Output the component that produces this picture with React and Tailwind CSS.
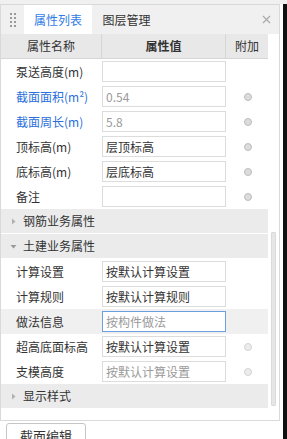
import React from 'react';

const rows = [
  { label: '泵送高度(m)', value: '', radio: false },
  { label: '截面面积(m²)', value: '0.54', blue: true, muted: true, radio: true },
  { label: '截面周长(m)', value: '5.8', blue: true, muted: true, radio: true },
  { label: '顶标高(m)', value: '层顶标高', radio: true },
  { label: '底标高(m)', value: '层底标高', radio: true },
  { label: '备注', value: '', radio: true },
];

const civilRows = [
  { label: '计算设置', value: '按默认计算设置' },
  { label: '计算规则', value: '按默认计算规则' },
  { label: '做法信息', value: '按构件做法', muted: true, active: true },
  { label: '超高底面标高', value: '按默认计算设置', radio: true, light: true },
  { label: '支模高度', value: '按默认计算设置', muted: true, radio: true, light: true },
];

const Radio = ({ light }) => (
  <span
    className={`block w-[8px] h-[8px] rounded-full border ${
      light ? 'border-[#d4d4d4] bg-[#ececec]' : 'border-[#bdbdbd] bg-[#dcdcdc]'
    }`}
  />
);

const PropRow = ({ row }) => (
  <div className={`flex h-[25px] ${row.active ? 'bg-[#f0f0f0]' : ''}`}>
    <div
      className={`w-[101px] pl-[15px] flex items-center whitespace-nowrap ${
        row.blue ? 'text-[#2a6fdb]' : 'text-[#333]'
      }`}
    >
      {row.label}
    </div>
    <div
      className={`w-[124px] h-[21px] mt-[2px] border bg-white flex items-center pl-[3px] whitespace-nowrap ${
        row.active ? 'border-[#6a9fe0]' : 'border-[#dcdcdc]'
      } ${row.muted ? 'text-[#9a9a9a]' : 'text-[#333]'}`}
    >
      {row.value}
    </div>
    <div className="flex-1 flex items-center justify-center pl-[1px]">
      {row.radio && <Radio light={row.light} />}
    </div>
  </div>
);

const GroupHeader = ({ title, open }) => (
  <div className="h-[25px] border-b border-white bg-[#ebebeb] flex items-center text-[#333]">
    <span className="w-[22px] flex justify-center pl-[2px]">
      {open ? (
        <svg width="7" height="7" viewBox="0 0 7 7">
          <path d="M0.5 2 L6.5 2 L3.5 5.5 Z" fill="#9a9a9a" />
        </svg>
      ) : (
        <svg width="7" height="7" viewBox="0 0 7 7">
          <path d="M2 0.5 L5.5 3.5 L2 6.5 Z" fill="#b0b0b0" />
        </svg>
      )}
    </span>
    <span>{title}</span>
  </div>
);

const App = () => {
  return (
    <div
      className="w-[287px] h-[439px] bg-white flex flex-col overflow-hidden text-[12px] leading-none"
      style={{ fontFamily: '"Noto Sans CJK SC", "Noto Sans", sans-serif' }}
    >
      <div className="h-[4px] bg-[#f0f0f0] shrink-0" />
      <div className="flex flex-1 min-h-0">
        <div className="w-[283px] flex flex-col">
          {/* Panel */}
          <div className="w-[280px] h-[417px] border border-[#d9d9d9] flex flex-col shrink-0">
            {/* Tabs */}
            <div className="h-[29px] bg-[#f0f0f0] flex items-stretch shrink-0">
              <div className="w-[23px] flex items-center justify-center">
                <div className="grid grid-cols-2 gap-x-[2px] gap-y-[2px]">
                  {Array.from({ length: 8 }).map((_, i) => (
                    <span key={i} className="block w-[2px] h-[2px] bg-[#9a9a9a]" />
                  ))}
                </div>
              </div>
              <div className="w-[68px] bg-white flex items-center justify-center text-[#2f7be6]">
                属性列表
              </div>
              <div className="w-[69px] flex items-center justify-center text-[#333]">图层管理</div>
              <div className="flex-1" />
              <div className="w-[26px] flex items-center justify-center">
                <svg width="9" height="9" viewBox="0 0 9 9">
                  <path d="M1 1 L8 8 M8 1 L1 8" stroke="#a8a8a8" strokeWidth="1.1" />
                </svg>
              </div>
            </div>

            <div className="flex flex-1 min-h-0">
              {/* Grid */}
              <div className="w-[267px] flex flex-col">
                <div className="h-[25px] flex bg-[#e8e8e8] border-b border-[#d6d6d6] text-[#333] shrink-0">
                  <div className="w-[101px] flex items-center justify-center border-r border-[#d6d6d6]">
                    属性名称
                  </div>
                  <div className="w-[124px] flex items-center justify-center border-r border-[#d6d6d6] font-bold">
                    属性值
                  </div>
                  <div className="flex-1 flex items-center justify-center">附加</div>
                </div>
                {rows.map((r) => (
                  <PropRow key={r.label} row={r} />
                ))}
                <GroupHeader title="钢筋业务属性" />
                <GroupHeader title="土建业务属性" open />
                {civilRows.map((r) => (
                  <PropRow key={r.label} row={r} />
                ))}
                <GroupHeader title="显示样式" />
              </div>
              {/* Scrollbar */}
              <div className="flex-1 pt-[198px] pl-[3px]">
                <div className="w-[5px] h-[174px] bg-[#e6e6e6] border border-[#dadada] rounded-[1px]" />
              </div>
            </div>
          </div>

          {/* Bottom button */}
          <div className="pt-[2px] pl-[6px]">
            <div className="w-[80px] h-[24px] border border-[#c6c6c6] rounded-[3px] bg-white flex items-center justify-center text-[#333] text-[13px]">
              截面编辑
            </div>
          </div>
        </div>
        <div className="w-[4px] bg-[#111]" />
      </div>
    </div>
  );
};

export default App;
